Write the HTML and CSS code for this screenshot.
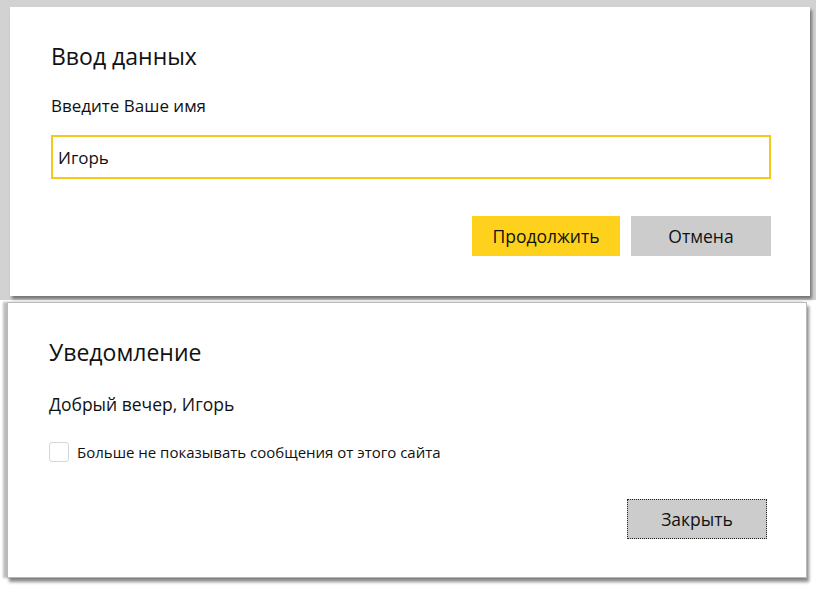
FILE: index.html
```html
<!DOCTYPE html>
<html lang="ru">
<head>
<meta charset="utf-8">
<title>Диалоги</title>
<link rel="stylesheet" href="styles.css">
</head>
<body>
<div class="shot shot-top">
  <section class="dialog dialog-prompt">
    <h1 class="dialog-title">Ввод данных</h1>
    <label class="field-label" for="name">Введите Ваше имя</label>
    <input class="text-input" id="name" type="text" value="Игорь">
    <div class="actions">
      <button class="btn btn-primary" type="button">Продолжить</button>
      <button class="btn btn-secondary" type="button">Отмена</button>
    </div>
  </section>
</div>
<div class="shot shot-bottom">
  <section class="dialog dialog-alert">
    <h1 class="dialog-title">Уведомление</h1>
    <p class="message">Добрый вечер, Игорь</p>
    <label class="check">
      <span class="check-box"></span>
      <span class="check-label">Больше не показывать сообщения от этого сайта</span>
    </label>
    <div class="actions">
      <button class="btn btn-secondary btn-focus" type="button">Закрыть</button>
    </div>
  </section>
</div>
</body>
</html>
```
FILE: styles.css
```css
* { box-sizing: border-box; }
html, body {
  margin: 0;
  padding: 0;
  background: #ffffff;
}
body {
  font-family: "Open Sans", "Noto Sans", sans-serif;
  color: #111111;
  width: 824px;
  height: 597px;
  overflow: hidden;
}
.shot-top {
  width: 816px;
  height: 300px;
  background: #d2d2d2;
  padding: 7px 0 0 10px;
}
.shot-bottom {
  width: 812px;
  padding: 2px 0 0 7px;
}
.dialog {
  background: #ffffff;
  display: flex;
  flex-direction: column;
}
.dialog-prompt {
  width: 800px;
  height: 289px;
  padding: 33px 39px 0 41px;
  box-shadow: 2px 3px 3px rgba(0, 0, 0, 0.45);
}
.dialog-alert {
  width: 800px;
  height: 276px;
  padding: 33px 39px 0 41px;
  border: 1px solid #b9b9b9;
  box-shadow: 2px 4px 3px rgba(0, 0, 0, 0.45), -4px 0 2px rgba(0, 0, 0, 0.25);
}
.dialog-title {
  margin: 0;
  font-size: 23px;
  font-weight: 400;
  line-height: 32px;
}
.field-label {
  margin-top: 23px;
  font-size: 17px;
  line-height: 22px;
}
.text-input {
  margin-top: 18px;
  width: 720px;
  height: 44px;
  border: 2px solid #f5c91c;
  padding: 0 5px;
  font-family: inherit;
  font-size: 17px;
  color: #111111;
  outline: none;
  background: #ffffff;
}
.actions {
  display: flex;
  justify-content: flex-end;
  gap: 11px;
  margin-top: 37px;
}
.btn {
  height: 40px;
  border: 0;
  font-family: inherit;
  font-size: 17.5px;
  color: #111111;
  padding: 0;
}
.btn-primary {
  width: 148px;
  background: #fdd11c;
}
.btn-secondary {
  width: 140px;
  background: #cccccc;
}
.btn-focus {
  border: 1px dotted #222222;
}
.message {
  margin: 24px 0 0;
  font-size: 17.5px;
  line-height: 24px;
}
.check {
  display: flex;
  align-items: center;
  gap: 8px;
  margin-top: 26px;
}
.check-box {
  width: 20px;
  height: 20px;
  border: 1px solid #d6d6d6;
  border-radius: 3px;
  background: #ffffff;
}
.check-label {
  font-size: 15px;
  line-height: 20px;
}
.dialog-alert .actions {
  margin-top: 37px;
}
```
